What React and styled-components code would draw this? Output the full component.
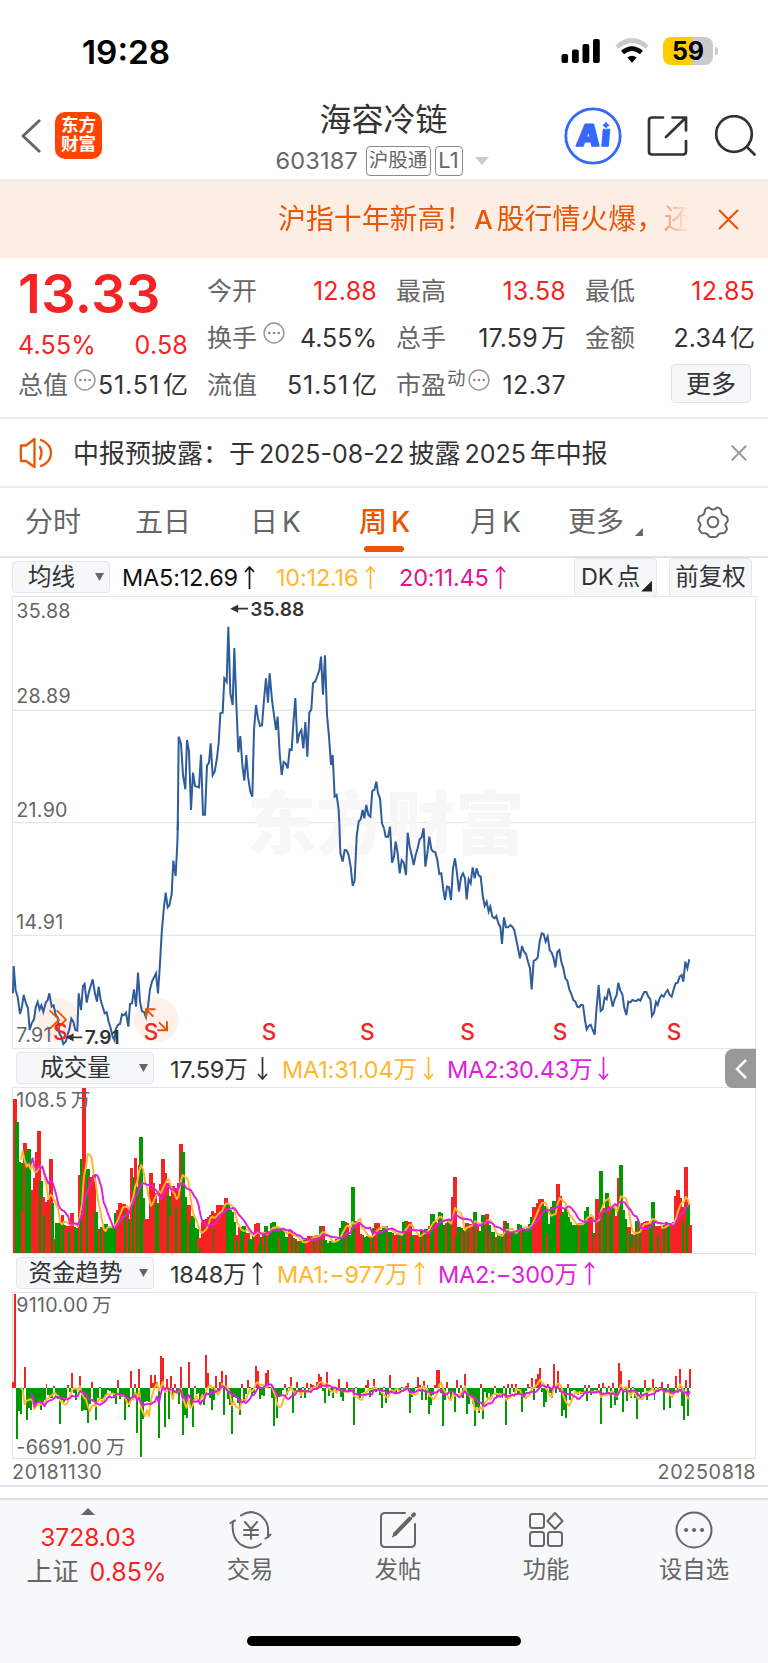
import * as React from 'react'
import styled, { createGlobalStyle } from 'styled-components'

const RED = '#f52323'
const GREEN = '#009a00'
const ORANGE = '#ea5504'
const YELLOW = '#ffb72e'
const PURPLE = '#e01ee0'
const PINK = '#e5128a'
const BLUE = '#2f5c9b'
const DARK = '#333333'
const GREY = '#666666'

const GlobalStyle = createGlobalStyle`
  * {
    box-sizing: border-box;
  }

  body {
    margin: 0;
    background: #fff;
    font-family: Inter, 'Noto Sans CJK SC', sans-serif;
    color: ${DARK};
  }
`

// The chart series are kept in thirds of a pixel, STEP is the distance
// between two weeks.
const UNIT = 3
const STEP = 5.922
const FIRST_X = 38.5
const FRAME_X = 39
const FRAME_WIDTH = 742

const PRICE_LINE = [
  {
    dy: 672,
    points:
      '39,520 41,438 47,512 53,530 60,582 66,560 71,525 78,550 84,565 89,630 95,610 102,598 107,562 113,546 119,568 124,556 130,576 137,548 143,540 148,520 155,560 161,556 167,585 173,592 178,640 184,650 190,672 198,664 204,640 208,628 214,596 220,605 226,630 232,632 236,520 243,570 249,498 254,492 260,548 267,515 272,498 278,478 285,520 291,545 296,500 302,540 308,560 314,580 320,577 326,605 332,625 338,650 343,660 348,625 355,614 360,612 366,583 372,586 378,578 385,620 390,552 396,550 402,508 408,560 414,458 420,545 426,574 432,576 438,592 444,560 450,508 456,485 462,472 468,460 474,520 480,430 485,340 491,270 497,218 503,262 508,256 515,222 520,122 527,168 532,70 534,0',
  },
  {
    dy: -18,
    points:
      '533,720 534,640 536,440 543,462 549,555 556,598 561,450 567,485 573,660 579,548 585,588 597,592 603,494 609,674 615,674 621,527 627,518 632,460 638,556 644,545 650,510 656,460 661,370 668,368 673,265 680,276 685,110 691,310 698,345 703,174 709,340 715,487 721,438 727,525 733,572 739,495 744,560 751,605 757,620 762,420 768,345 774,385 780,408 786,406 792,330 798,265 804,338 809,250 816,330 822,375 828,420 833,380 839,490 845,555 851,516 857,520 863,535 869,478 875,480 880,400 886,324 892,460 898,430 904,420 910,475 916,396 922,500 928,368 934,358 939,280 946,274 952,258 958,240 963,200 969,314 975,196 981,375 987,440 993,525 998,495 1004,620 1010,615 1016,660 1018,700',
  },
  {
    dy: 672,
    points:
      '1018,10 1021,98 1028,125 1034,90 1040,92 1046,105 1052,140 1058,198 1064,182 1070,50 1075,12',
  },
  {
    dy: -18,
    points:
      '1075,702 1076,695 1082,688 1088,660 1093,685 1099,645 1105,675 1111,680 1117,602 1123,600 1129,575 1134,610 1140,625 1146,700 1152,715',
  },
  {
    dy: 132,
    dx: 1152,
    points:
      '0,565 5,590 12,590 18,560 24,668 30,650 35,605 41,640 47,700 53,660 59,668 66,705 71,578 77,620 83,645 89,675 95,645 101,625 107,598 113,592 119,565 124,680 130,640 136,590 142,628 148,635 154,637 160,660 166,702 172,700 178,750 183,780 189,740 195,742 201,780 207,685 213,655 219,700 225,755 231,712 237,700 243,715 248,778 254,718 260,730 266,682 272,715 278,685 284,706 290,710 296,765 302,798 308,785 314,815 319,800 325,830 332,835 337,828 343,850 349,860 354,912 360,832 366,862 372,862 379,855 385,860 391,870 397,900 403,930 408,955 414,918 420,935 426,942 432,965 438,985 443,1048 449,962 455,960 461,953 467,905 473,880 479,882 485,905 491,890 497,930 503,938 509,955 514,982 520,936 526,930 532,965 538,985 544,1015 550,1022 556,1048 562,1062 568,1080 574,1085 580,1100 586,1102 591,1094 597,1096 603,1140 608,1168 614,1158 620,1154 626,1170 632,1184 638,1100 644,1035 650,1113 656,1108 662,1073 668,1078 674,1045 680,1070 686,1100 692,1078 698,1065 703,1028 709,1052 715,1062 721,1105 727,1125 733,1085 739,1087 745,1080 751,1082 757,1083 763,1078 769,1082 775,1068 781,1056 787,1056 793,1070 799,1078 804,1128 810,1118 816,1086 821,1095 827,1075 833,1065 839,1070 845,1058 851,1050 857,1065 863,1070 869,1048 875,1030 881,1028 887,1010 893,1005 898,1025 904,965 910,985 916,958',
  },
]

// r = up week, g = down week, the number is the top of the bar
const VOLUME = `
r515 r56 g127 g247 g250 r393 r190 g220 g206 g330 r330 r295 r217 r153 g302 r350 g408 r366 r360 r236
g370 r478 g430 g428 g425 r405 g435 r440 r437 g455 r398 r440 g445 g460 r284 g238 r24 r300 g268 r290
r292 r286 g397 g500 r447 g440 r447 g432 g445 g440 g445 g440 g400 r390 r370 r372 r371 g400 r385 g418
r264 g292 r235 g320 r255 g172 g355 r417 r418 r418 r280 r310 r340 g368 g368 r312 r237 r280 r310 g349
r408 r318 r325 g385 r310 r191 g215 g351 g398 r374 g425 g408 g445 g447 r475 g500 r425 r420 r418 r412
r405 r394 g443 r400 r375 r375 r375 r374 r355 g373 g390 g395 g425 r465 g480 r440 g440 g438 r462 r460
g478 g480 g462 r433 r430 g495 g470 r462 g437 r452 g468 g428 g427 g442 g440 r475 g445 g444 g472 g470
r452 r455 g475 r478 g482 r483 g482 g507 g480 r478 r468 r467 r468 g478 r466 r465 g437 r438 g480 g490
g488 g482 g487 g482 g478 g470 g445 g424 g425 r428 g465 g493 g320 g450 r422 r425 r462 r465 g470 g472
g468 g473 r468 g443 r430 r430 g455 g450 g437 g437 r460 g455 g458 r465 r465 r462 g465 r470 g425 g424
r425 r426 g465 g480 r465 r467 r468 g453 r455 g448 r450 r437 g402 g403 r425 r430 g395 g398 g445 g435
r430 g418 g425 r352 r291 g470 g442 g443 r450 g450 r430 g432 r432 r432 g397 r435 g452 g453 g405 g405
r402 g435 r460 g455 g470 r472 g465 g468 g463 r423 g430 r460 r458 g458 g460 g458 g432 g435 r447 g448
g447 g440 g432 g410 r381 r380 r368 r357 r358 g378 g380 r463 g432 g382 g364 g365 r312 r348 g405 g395
g385 g410 g425 g436 g436 g436 g428 r430 g435 g430 g392 g382 r410 r412 g460 r470 r358 r400 g272 r385
g400 g338 r378 g405 g378 r408 r410 r293 g255 g390 g418 g440 r442 g462 r500 r465 g423 r440 g440 r430
r427 r422 r430 g435 g367 r440 r438 g465 r438 r438 g436 r425 g435 g435 r430 r425 r347 r330 r355 r380
g425 r262 g375 r435`

const FUNDS = [
  18, 284, -153, -68, -76, -10, 65, -96, -58, -65, -35, -55, -45, -42, -64, -40, -35, 13, -20, -30,
  -28, 7, -28, -32, -106, -35, -40, -30, 10, -12, 47, -15, -35, -5, 38, -67, -66, -65, -105, -48,
  18, -42, -95, -30, 4, -32, -30, -20, -5, -8, -18, -28, -48, 24, -32, -25, -20, -96, -45, -56,
  52, -25, 12, -134, 57, -206, -93, -42, -38, -40, 40, 15, 40, 20, -150, 97, 92, -115, 28, -92,
  37, -20, 12, -15, -48, 64, -139, -80, -90, 78, -60, -117, 8, -18, -15, -48, -25, -50, 100, 46,
  -30, -64, -35, 36, -5, 20, 52, -80, 40, -32, -50, -137, -25, -30, -45, -80, 12, -40, -18, 26,
  5, -20, -15, 68, 52, -32, -20, -22, 46, 56, 3, -30, -112, -25, -90, -25, -20, -5, 12, -20,
  5, 33, -75, -10, 18, -12, -30, 5, -28, 15, -8, 13, 10, -5, 18, 42, 34, -8, -44, 48,
  -22, -12, -30, 3, -8, 28, -25, -38, -10, 18, -5, -8, -12, -111, 3, -20, -28, -15, -12, 10,
  25, -25, -10, 28, -12, -8, -20, -59, 4, -45, -15, 41, -15, -10, -18, -5, -8, 3, -5, 8,
  15, -75, -25, -15, 5, 33, 10, -35, 22, -34, 10, -76, -50, -20, 10, 55, 55, -15, -114, -36,
  18, -12, -38, -12, -70, 26, -15, 10, -30, 42, -78, -48, -30, -48, -114, -55, -75, 14, -92, -10,
  -30, -15, -25, -20, 6, -28, -22, -20, -30, 6, -109, 12, -18, 12, -12, 12, -20, -18, -72, -30,
  -8, 12, 5, 32, -36, 28, 44, 62, -10, -56, -40, 12, -15, -30, 74, -15, 52, -10, -84, -65,
  -88, 12, -35, -8, -5, -12, -20, -10, -18, -10, 10, -38, 10, -20, -15, -5, -15, 12, -108, 15,
  3, -15, 8, -60, 15, -50, -35, 76, 52, -72, -5, -38, 26, -30, 3, -30, -92, -12, -20, -10,
  24, -34, -12, -5, 28, -35, 3, -10, 5, 18, -66, -8, 14, -60, -10, -10, 38, -15, 57, -54,
  -95, 26, -84, 58,
]

const volumeBars = VOLUME.trim()
  .split(/\s+/)
  .map((token) => ({ up: token[0] === 'r', top: Number(token.slice(1)) }))

const weekX = (index) => FIRST_X + index * STEP

const movingAverage = (values, length) =>
  values
    .map((_, i) => {
      if (i < length - 1) return null
      const part = values.slice(i - length + 1, i + 1)
      return `${weekX(i).toFixed(1)},${(part.reduce((a, b) => a + b, 0) / length).toFixed(1)}`
    })
    .filter(Boolean)
    .join(' ')

const Screen = styled.main`
  width: 768px;
  height: 1663px;
  overflow: hidden;
  display: flex;
  flex-direction: column;
  background: #fff;
`

/* status bar */

const StyledStatusBar = styled.div`
  height: 90px;
  padding: 37px 55px 0 82px;
  display: flex;
  align-items: flex-start;
  justify-content: space-between;
`

const Clock = styled.span`
  font-size: 33.3px;
  line-height: 30px;
  font-weight: 600;
  color: #000;
`

const StatusIcons = styled.div`
  display: flex;
  align-items: center;
  gap: 14px;
`

const Battery = styled.div`
  position: relative;
  width: 50px;
  height: 28px;
  border-radius: 8px;
  background: linear-gradient(90deg, #ffcc00 58%, #cacaca 58%);
  color: #000;
  font-size: 25px;
  line-height: 28px;
  font-weight: 700;
  text-align: center;

  &::after {
    content: '';
    position: absolute;
    right: -5px;
    top: 10px;
    width: 3px;
    height: 8px;
    border-radius: 0 3px 3px 0;
    background: #cacaca;
  }
`

const StatusBar = () => (
  <StyledStatusBar>
    <Clock>19:28</Clock>
    <StatusIcons>
      <svg width="40" height="26" viewBox="0 0 40 26">
        <rect x="0.5" y="16" width="6.6" height="9" rx="2" />
        <rect x="11" y="11.5" width="6.8" height="13.5" rx="2" />
        <rect x="21.5" y="6" width="6.8" height="19" rx="2" />
        <rect x="32" y="1" width="6.8" height="24" rx="2" />
      </svg>
      <svg width="34" height="26" viewBox="0 0 34 26" fill="none" strokeWidth="4.6">
        <path d="M2 9 Q17 -4 32 9" stroke="#cacaca" />
        <path d="M7.5 14.6 Q17 6.6 26.5 14.6" stroke="#000" />
        <path d="M12.3 19.6 Q17 15.8 21.700 19.6 L17 24.800Z" fill="#000" />
      </svg>
      <Battery>59</Battery>
    </StatusIcons>
  </StyledStatusBar>
)

/* header */

const StyledHeader = styled.header`
  height: 91px;
  padding: 0 12px 0 20px;
  border-bottom: 2px solid #ececee;
  display: grid;
  grid-template-columns: 240px 1fr 192px;
`

const HeaderSide = styled.div`
  display: flex;
  align-items: center;
  height: 92px;
`

const BackIcon = styled.svg`
  width: 22px;
  height: 36px;
`

const Logo = styled.div`
  width: 47px;
  height: 47px;
  margin: -2px 0 0 13px;
  border-radius: 10px;
  background: #ff4400;
  color: #fff;
  display: flex;
  flex-direction: column;
  justify-content: center;
  text-align: center;
  font-size: 17.5px;
  line-height: 19.5px;
  font-weight: 700;
  padding-bottom: 2px;
`

const HeaderCenter = styled.div`
  display: flex;
  flex-direction: column;
`

const StockName = styled.h1`
  margin: 12px 0 0 59.5px;
  font-size: 32px;
  line-height: 36px;
  font-weight: 400;
`

const StockMeta = styled.div`
  display: flex;
  align-items: center;
  height: 31px;
  margin: 7px 0 0 15.5px;
  color: ${GREY};
`

const StockCode = styled.span`
  width: 90px;
  font-size: 23.5px;
  letter-spacing: 0.2px;
`

const Tag = styled.span`
  width: ${(props) => props.$width};
  height: 30px;
  margin-right: 4px;
  border: 1.5px solid #8a8a8a;
  border-radius: 4px;
  font-size: ${(props) => props.$size};
  line-height: 27px;
  text-align: center;
  white-space: nowrap;
`

const TagArrow = styled.svg`
  width: 14px;
  height: 8px;
  margin-left: 8px;
`

const HeaderActions = styled(HeaderSide)`
  justify-content: space-between;
`

const AiLetters = styled.text`
  font-size: 30px;
  font-weight: 900;
  letter-spacing: 1px;
  fill: #3768fb;
  stroke: #3768fb;
  stroke-width: 1.6px;
  stroke-linejoin: round;
`

const Header = () => (
  <StyledHeader>
    <HeaderSide>
      <BackIcon viewBox="0 0 22 36" fill="none" stroke="#666" strokeWidth="3">
        <path d="M20 2 L3 18 L20 34" strokeLinejoin="round" />
      </BackIcon>
      <Logo>
        <span>东方</span>
        <span>财富</span>
      </Logo>
    </HeaderSide>
    <HeaderCenter>
      <StockName>海容冷链</StockName>
      <StockMeta>
        <StockCode>603187</StockCode>
        <Tag $width="65px" $size="19.5px">沪股通</Tag>
        <Tag $width="28px" $size="22px">L1</Tag>
        <TagArrow viewBox="0 0 14 8">
          <path d="M0 0H14L7 8Z" fill="#ccc" />
        </TagArrow>
      </StockMeta>
    </HeaderCenter>
    <HeaderActions>
      <svg width="58" height="58" viewBox="0 0 58 58">
        <circle cx="29" cy="29" r="27.2" fill="none" stroke="#3768fb" strokeWidth="2.8" />
        <AiLetters x="15" y="39" transform="skewX(-5)">Aı</AiLetters>
        <path d="M42 13.500 Q43 17.300 46.500 18.200 Q43 19.200 42 22.500 Q41 19.200 37.500 18.200 Q41 17.300 42 13.500Z" fill="#3768fb" stroke="#fff" strokeWidth="0.600" />
      </svg>
      <svg width="42" height="42" viewBox="0 0 42 42" fill="none" stroke="#333" strokeWidth="2.7" strokeLinecap="round" strokeLinejoin="round">
        <path d="M16 2.500H5Q2 2.500 2 5.500V36.500Q2 39.500 5 39.500H36Q39 39.500 39 36.500V26" />
        <path d="M25.500 2.500H39V15.500M38.500 3L19 22" />
      </svg>
      <svg width="42" height="42" viewBox="0 0 42 42" fill="none" stroke="#333" strokeWidth="2.7" strokeLinecap="round">
        <circle cx="20" cy="19" r="17.800" />
        <path d="M33 32 L40.500 39.500" />
      </svg>
    </HeaderActions>
  </StyledHeader>
)

/* orange banner */

const StyledBanner = styled.div`
  height: 77px;
  padding: 0 29px 0 278px;
  background: #fdeee5;
  color: ${ORANGE};
  display: flex;
  align-items: center;
  justify-content: space-between;
`

const BannerText = styled.span`
  width: 416px;
  white-space: nowrap;
  font-size: 27.9px;
  line-height: 40px;
  mask-image: linear-gradient(90deg, #000 375px, rgba(0, 0, 0, 0.45) 390px, transparent 412px);

  b {
    font-weight: 500;
    font-size: 26px;
    margin: 0 4px 0 1px;
  }
`

const Cross = ({ size, color, width = 2 }) => (
  <svg width={size} height={size} viewBox="0 0 20 20" stroke={color} strokeWidth={width}>
    <path d="M1 1 L19 19 M19 1 L1 19" />
  </svg>
)

/* quote */

const StyledQuote = styled.section`
  height: 161px;
  padding: 9px 13px 0 18px;
  display: grid;
  grid-template-columns: repeat(4, 170px);
  column-gap: 19px;
  border-bottom: 2px solid #ececee;
`

const QuoteColumn = styled.div`
  display: flex;
  flex-direction: column;
`

const Price = styled.div`
  height: 54px;
  font-size: 54px;
  line-height: 53px;
  font-weight: 600;
  color: ${RED};
  letter-spacing: 0.4px;
`

const QuoteCell = styled.div`
  height: ${(props) => props.$height || '47px'};
  display: flex;
  align-items: center;
  justify-content: space-between;
  font-size: 25px;
  line-height: 40px;
  white-space: nowrap;
`

const QuoteLabel = styled.span`
  display: flex;
  align-items: center;
  color: ${GREY};
  font-size: 25px;

  sup {
    font-size: 18.5px;
    line-height: 20px;
    margin: -14px 0 0 1px;
  }
`

const QuoteValue = styled.span`
  color: ${(props) => (props.$up ? RED : DARK)};
  letter-spacing: ${(props) => props.$spacing || '0.2px'};

  em {
    font-style: normal;
    letter-spacing: 0;
    margin-left: 3px;
  }
`

const MoreButton = styled.button`
  width: 80px;
  height: 39px;
  margin: -2px 4px 0 auto;
  padding: 0;
  border: 1.5px solid #e1e5ea;
  border-radius: 4px;
  background: #f6f7f9;
  color: ${DARK};
  font: 400 25px/34px Inter, 'Noto Sans CJK SC', sans-serif;
`

const Hint = styled.svg`
  width: 22px;
  height: 22px;
  margin: -9px 0 0 ${(props) => props.$left || '6px'};
`

const HintIcon = (props) => (
  <Hint viewBox="0 0 22 22" {...props}>
    <circle cx="11" cy="11" r="9.900" fill="none" stroke="#999" strokeWidth="1.500" />
    <g fill="#888">
      <circle cx="6.300" cy="11" r="1.300" />
      <circle cx="11" cy="11" r="1.300" />
      <circle cx="15.700" cy="11" r="1.300" />
    </g>
  </Hint>
)

const Quote = () => (
  <StyledQuote>
    <QuoteColumn>
      <Price>13.33</Price>
      <QuoteCell $height="48px">
        <QuoteValue $up>4.55%</QuoteValue>
        <QuoteValue $up>0.58</QuoteValue>
      </QuoteCell>
      <QuoteCell $height="31px">
        <QuoteLabel>总值<HintIcon /></QuoteLabel>
        <QuoteValue $spacing="0.9px">51.51<em>亿</em></QuoteValue>
      </QuoteCell>
    </QuoteColumn>
    <QuoteColumn>
      <QuoteCell>
        <QuoteLabel>今开</QuoteLabel>
        <QuoteValue $up>12.88</QuoteValue>
      </QuoteCell>
      <QuoteCell>
        <QuoteLabel>换手<HintIcon /></QuoteLabel>
        <QuoteValue $spacing="0">4.55%</QuoteValue>
      </QuoteCell>
      <QuoteCell>
        <QuoteLabel>流值</QuoteLabel>
        <QuoteValue $spacing="0.9px">51.51<em>亿</em></QuoteValue>
      </QuoteCell>
    </QuoteColumn>
    <QuoteColumn>
      <QuoteCell>
        <QuoteLabel>最高</QuoteLabel>
        <QuoteValue $up>13.58</QuoteValue>
      </QuoteCell>
      <QuoteCell>
        <QuoteLabel>总手</QuoteLabel>
        <QuoteValue>17.59<em>万</em></QuoteValue>
      </QuoteCell>
      <QuoteCell>
        <QuoteLabel>市盈<sup>动</sup><HintIcon $left="2px" /></QuoteLabel>
        <QuoteValue $spacing="0.4px">12.37</QuoteValue>
      </QuoteCell>
    </QuoteColumn>
    <QuoteColumn>
      <QuoteCell>
        <QuoteLabel>最低</QuoteLabel>
        <QuoteValue $up>12.85</QuoteValue>
      </QuoteCell>
      <QuoteCell>
        <QuoteLabel>金额</QuoteLabel>
        <QuoteValue $spacing="0">2.34<em>亿</em></QuoteValue>
      </QuoteCell>
      <QuoteCell>
        <MoreButton>更多</MoreButton>
      </QuoteCell>
    </QuoteColumn>
  </StyledQuote>
)

/* notice */

const StyledNotice = styled.div`
  height: 69px;
  padding: 0 21px 0 19px;
  display: flex;
  align-items: center;
  border-bottom: 2px solid #ececee;
`

const NoticeText = styled.span`
  flex: 1;
  margin: -3px 0 0 20px;
  font-size: 26px;
  white-space: nowrap;

  span {
    font-size: 25px;
    margin: 0 4px;
  }
`

const Notice = () => (
  <StyledNotice>
    <svg width="34" height="32" viewBox="0 0 34 32" fill="none" stroke={ORANGE} strokeWidth="2.300" strokeLinejoin="round" strokeLinecap="round">
      <path d="M2 8.500H7L15.500 2V30L7 24H2Q1.500 16 2 8.500Z" />
      <path d="M21 10Q24 16 21 22M22 3Q32 7 32 16T22 29" />
    </svg>
    <NoticeText>
      中报预披露：于<span>2025-08-22</span>披露<span>2025</span>年中报
    </NoticeText>
    <Cross size={16} color="#999" width={2.4} />
  </StyledNotice>
)

/* period tabs */

const StyledTabs = styled.nav`
  height: 70px;
  padding-left: 25px;
  display: flex;
  border-bottom: 2px solid #e1e3e8;
`

const Tab = styled.div`
  position: relative;
  width: ${(props) => props.$width};
  font-size: 28px;
  line-height: 68px;
  white-space: nowrap;
  font-weight: ${(props) => (props.$active ? 500 : 400)};
  color: ${(props) => (props.$active ? ORANGE : GREY)};

  b {
    font-weight: inherit;
    margin-left: 4px;
  }

  i {
    margin: 0 0 -4px 3px;
  }

  &::after {
    content: '';
    display: ${(props) => (props.$active ? 'block' : 'none')};
    position: absolute;
    left: 5px;
    bottom: 4px;
    width: 40px;
    height: 6px;
    border-radius: 3px;
    background: ${ORANGE};
  }
`

const CornerMark = styled.i`
  display: inline-block;
  width: ${(props) => props.$size};
  height: ${(props) => props.$size};
  background: ${(props) => props.$color};
  clip-path: polygon(100% 0, 100% 100%, 0 100%);
`

const GearIcon = styled.svg`
  width: 32px;
  height: 32px;
  margin-top: 18px;
`

const Tabs = () => (
  <StyledTabs>
    <Tab $width="110px">分时</Tab>
    <Tab $width="115px">五日</Tab>
    <Tab $width="109px">日<b>K</b></Tab>
    <Tab $width="111px" $active>周<b>K</b></Tab>
    <Tab $width="98px">月<b>K</b></Tab>
    <Tab $width="129px">
      更多 <CornerMark $size="8px" $color={GREY} />
    </Tab>
    <GearIcon viewBox="0 0 32 32" fill="none" stroke="#666" strokeWidth="2" strokeLinejoin="round">
      <path d="M10.500 1.800 Q12 1.200 13 2.300 Q16 4.800 19 2.300 Q20 1.200 21.500 1.800 L23.300 2.900 Q24.300 3.800 24.200 5.300 Q24.300 8.900 28.300 9.900 Q29.700 10.300 30.200 11.500 L30.800 14 Q30.900 15.200 30 16 Q27.200 18.600 29.600 21.500 Q30.300 22.800 29.600 24 L27.700 26.600 Q26.800 27.600 25.400 27.300 Q21.700 26.800 20.500 29.800 Q19.900 31 18.500 31 H13.500 Q12.100 31 11.500 29.800 Q10.300 26.800 6.600 27.300 Q5.200 27.600 4.300 26.600 L2.400 24 Q1.700 22.800 2.400 21.500 Q4.800 18.600 2 16 Q1.100 15.200 1.200 14 L1.800 11.500 Q2.300 10.300 3.700 9.900 Q7.700 8.900 7.800 5.300 Q7.700 3.800 8.700 2.900Z" />
      <circle cx="16" cy="16" r="5.300" />
    </GearIcon>
  </StyledTabs>
)

/* indicator rows */

const IndicatorRow = styled.div`
  position: relative;
  height: ${(props) => props.$height};
  padding-left: ${(props) => props.$left};
  display: flex;
  align-items: center;
`

const Select = styled.div`
  width: ${(props) => props.$width};
  height: 32px;
  margin-right: ${(props) => props.$right};
  padding-right: 5px;
  border: 1.5px solid #e3e6eb;
  border-radius: 4px;
  background: #f6f7f9;
  display: flex;
  align-items: center;
  font-size: 23.5px;
  line-height: 28px;

  span {
    flex: 1;
    padding-right: 5px;
    text-align: center;
  }

  &::after {
    content: '';
    width: 9px;
    height: 8px;
    background: ${GREY};
    clip-path: polygon(0 0, 100% 0, 50% 100%);
  }
`

const StyledReading = styled.span`
  width: ${(props) => props.$width};
  color: ${(props) => props.$color};
  display: flex;
  align-items: center;
  font-size: 23.5px;
  white-space: nowrap;
  letter-spacing: -0.2px;

  svg {
    margin-left: ${(props) => props.$gap || '6px'};
  }
`

const Reading = ({ children, down, ...props }) => (
  <StyledReading {...props}>
    {children}
    <svg width="11" height="23" viewBox="0 0 11 23" fill="none" stroke="currentColor" strokeWidth="1.700">
      <path d={down ? 'M5.500 0V22M1 17L5.500 22L10 17' : 'M5.500 23V1M1 6L5.500 1L10 6'} />
    </svg>
  </StyledReading>
)

const ToolButton = styled.button`
  width: 83px;
  height: 39px;
  margin-right: ${(props) => props.$right || '0'};
  padding: 0;
  border: 1.5px solid #e3e6eb;
  border-radius: 4px;
  background: #f6f7f9;
  color: ${DARK};
  font: 400 23.5px/34px Inter, 'Noto Sans CJK SC', sans-serif;
  white-space: nowrap;
  display: flex;
  align-items: center;
  justify-content: center;

  span {
    margin-left: 3px;
  }

  i {
    align-self: flex-end;
    margin: 0 -2px 4px 1px;
  }
`

const Collapse = styled.div`
  position: absolute;
  right: 12px;
  top: 0;
  width: 31px;
  height: 39px;
  border-radius: 8px 0 0 8px;
  background: #999;
  display: flex;
  align-items: center;
  justify-content: center;
`

/* charts */

const ChartFrame = styled.div`
  width: 744px;
  height: ${(props) => props.$height};
  margin-left: 12px;
  border: 1px solid #e3e5ea;

  svg {
    display: block;
    overflow: visible;
  }
`

const AxisLabel = styled.text`
  font-size: 59px;
  letter-spacing: 0.8px;
  fill: ${GREY};
`

const PeakLabel = styled.text`
  font-size: 57.5px;
  font-weight: 600;
  fill: ${DARK};
`

const Marker = styled.text`
  font-size: 68px;
  font-weight: 500;
  fill: ${RED};
  text-anchor: middle;
`

const Watermark = styled.text`
  font-size: 208px;
  font-weight: 900;
  fill: #f7f7f7;
`

const Average = styled.polyline`
  fill: none;
  stroke: ${(props) => props.$color};
  stroke-width: 5.8px;
  stroke-linejoin: round;
`

const Canvas = ({ height, top, children }) => (
  <svg
    width={FRAME_WIDTH}
    height={height}
    viewBox={`${FRAME_X} ${top} ${FRAME_WIDTH * UNIT} ${height * UNIT}`}
  >
    {children}
  </svg>
)

const PriceChart = () => (
  <ChartFrame $height="453px">
    <Canvas height={451} top={3}>
      {[343, 680, 1018].map((y) => (
        <path key={y} d={`M39 ${y}H2265`} stroke="#e2e7ee" strokeWidth="4" />
      ))}
      <Watermark x="741" y="759">东方财富</Watermark>
      <circle cx="170" cy="1272" r="67" fill="#fdeee5" fillOpacity="0.85" />
      <circle cx="469" cy="1272" r="67" fill="#fdeee5" fillOpacity="0.85" />
      <AxisLabel x="49" y="66">35.88</AxisLabel>
      <AxisLabel x="49" y="321">28.89</AxisLabel>
      <AxisLabel x="49" y="662">21.90</AxisLabel>
      <AxisLabel x="49" y="1000">14.91</AxisLabel>
      <AxisLabel x="49" y="1338">7.91</AxisLabel>
      {PRICE_LINE.map((part, i) => (
        <g key={i} transform={`translate(${part.dx || 0} ${part.dy})`}>
          <polyline points={part.points} fill="none" stroke={BLUE} strokeWidth="6" strokeLinejoin="miter" />
        </g>
      ))}
      <path d="M149 1243L177 1271L149 1299M170 1243L198 1271L170 1299" fill="none" stroke={ORANGE} strokeWidth="5.500" />
      <path d="M438 1264V1240H466M440 1242L460 1262M501 1276V1303H472M499 1301L477 1279" fill="none" stroke={ORANGE} strokeWidth="6" />
      {[181, 453, 807, 1102, 1403, 1680, 2022].map((x) => (
        <Marker key={x} x={x} y="1333">S</Marker>
      ))}
      <g fill={DARK} stroke={DARK} strokeWidth="5">
        <path d="M744 38H700M712 30L696 38L712 46Z" />
        <path d="M247 1324H208M218 1316L203 1324L218 1332Z" />
      </g>
      <PeakLabel x="751" y="60">35.88</PeakLabel>
      <PeakLabel x="254" y="1343">7.91</PeakLabel>
    </Canvas>
  </ChartFrame>
)

const VolumeChart = () => {
  const tops = volumeBars.map((bar) => bar.top)
  return (
    <ChartFrame $height="167px">
      <Canvas height={165} top={24}>
        <g shapeRendering="crispEdges">
          {volumeBars.map((bar, i) => (
            <rect key={i} x={Math.max(39, weekX(i) - 5)} y={bar.top} width="11.500" height={520 - bar.top} fill={bar.up ? RED : GREEN} />
          ))}
        </g>
        <AxisLabel x="49" y="82">
          108.5<tspan dx="11">万</tspan>
        </AxisLabel>
        <Average $color={YELLOW} points={movingAverage(tops, 5)} />
        <Average $color={PURPLE} points={movingAverage(tops, 10)} />
      </Canvas>
    </ChartFrame>
  )
}

const FundsChart = () => {
  const tops = FUNDS.map((value) => 400 - value)
  return (
    <ChartFrame $height="167px">
      <Canvas height={165} top={114}>
        <g shapeRendering="crispEdges">
          {FUNDS.map((value, i) => (
            <rect key={i} x={weekX(i) - 2.6} y={Math.min(400, 400 - value)} width={STEP} height={Math.abs(value)} fill={value > 0 ? RED : GREEN} />
          ))}
        </g>
        <AxisLabel x="49" y="170">
          9110.00<tspan dx="11">万</tspan>
        </AxisLabel>
        <AxisLabel x="49" y="597">
          -6691.00<tspan dx="11">万</tspan>
        </AxisLabel>
        <Average $color={YELLOW} points={movingAverage(tops, 5)} />
        <Average $color={PURPLE} points={movingAverage(tops, 10)} />
      </Canvas>
    </ChartFrame>
  )
}

const DateRow = styled.div`
  height: 28px;
  padding: 0 12px;
  border-bottom: 2px solid #e1e3e8;
  display: flex;
  justify-content: space-between;
  font-size: 19.8px;
  line-height: 26px;
  letter-spacing: 0.6px;
  color: ${GREY};
`

/* bottom bar */

const StyledBottomBar = styled.footer`
  flex: 1;
  margin-top: 11px;
  border-top: 2px solid #dcdee3;
  background: #f7f8fa;
  display: flex;
  flex-direction: column;
  align-items: center;
`

const NavItems = styled.div`
  width: 768px;
  height: 136px;
  display: grid;
  grid-template-columns: 176px repeat(4, 148px);
`

const IndexSummary = styled.div`
  display: flex;
  flex-direction: column;
  align-items: center;
  padding-top: 8px;
  color: ${RED};
  font-size: 24.5px;
  line-height: 34px;

  svg {
    margin-bottom: 5px;
  }
`

const IndexChange = styled.div`
  display: flex;
  align-items: center;
  gap: 11px;
  padding: 1px 0 0 17px;
  font-size: 25px;

  span {
    color: ${GREY};
    font-size: 26px;
  }
`

const StyledNavItem = styled.div`
  display: flex;
  flex-direction: column;
  align-items: center;
  padding-top: 10px;
  font-size: 23.3px;
  line-height: 40px;
  color: ${GREY};
`

const NavItem = ({ label, children }) => (
  <StyledNavItem>
    <svg width="44" height="40" viewBox="0 0 44 40" fill="none" stroke="#666" strokeWidth="2" strokeLinecap="round" strokeLinejoin="round">
      {children}
    </svg>
    {label}
  </StyledNavItem>
)

const HomeBar = styled.div`
  width: 274px;
  height: 10px;
  border-radius: 5px;
  background: #000;
`

const BottomBar = () => (
  <StyledBottomBar>
    <NavItems>
      <IndexSummary>
        <svg width="14" height="7" viewBox="0 0 14 7">
          <path d="M0 7L7 0L14 7Z" fill="#666" />
        </svg>
        <div>3728.03</div>
        <IndexChange>
          <span>上证</span>0.85%
        </IndexChange>
      </IndexSummary>
      <NavItem label="交易">
        <path d="M13 5.500Q22 -1 32 5Q41 12 40 22V27L42.500 24.500M40 27L37.500 28.500M33 34Q23 41.500 12 34Q3 27 5 11.500L2.500 13M5 11.500L7 10.500" />
        <path d="M17 12L23 19L29 12M23 19V29M16 20H30M16 25H30" />
      </NavItem>
      <NavItem label="发帖">
        <path d="M29 3H9Q5 3 5 7V33Q5 37 9 37H35Q39 37 39 33V14" />
        <path d="M19 24L34 8.500" strokeWidth="4" />
        <path d="M37 5.300L38 4.300" strokeWidth="4" />
        <path d="M17 26.500L19 24" />
      </NavItem>
      <NavItem label="功能">
        <rect x="6" y="4" width="14" height="14" rx="2.500" />
        <rect x="6" y="22" width="14" height="14" rx="2.500" />
        <rect x="24" y="22" width="14" height="14" rx="2.500" />
        <path d="M31 3L38.500 11L31 19L23.500 11Z" />
      </NavItem>
      <NavItem label="设自选">
        <circle cx="22" cy="20" r="17.500" />
        <path d="M14 20H14.100M22 20H22.100M30 20H30.100" strokeWidth="4" />
      </NavItem>
    </NavItems>
    <HomeBar />
  </StyledBottomBar>
)

export default function App() {
  return (
    <>
      <GlobalStyle />
      <Screen>
        <StatusBar />
        <Header />
        <StyledBanner>
          <BannerText>
            沪指十年新高！<b>A</b>股行情火爆，还
          </BannerText>
          <Cross size={21} color={ORANGE} />
        </StyledBanner>
        <Quote />
        <Notice />
        <Tabs />
        <IndicatorRow $height="38px" $left="12px">
          <Select $width="98px" $right="12px"><span>均线</span></Select>
          <Reading $width="154px" $color="#111">MA5:12.69</Reading>
          <Reading $width="123px" $color={YELLOW} $gap="7px">10:12.16</Reading>
          <Reading $width="175px" $color={PINK}>20:11.45</Reading>
          <ToolButton $right="12px">
            DK<span>点</span><CornerMark $size="11px" $color="#222" />
          </ToolButton>
          <ToolButton>前复权</ToolButton>
        </IndicatorRow>
        <PriceChart />
        <IndicatorRow $height="38px" $left="16px">
          <Select $width="138px" $right="16px"><span>成交量</span></Select>
          <Reading $width="112px" $color={DARK} $gap="9px" down>17.59万</Reading>
          <Reading $width="165px" $color={YELLOW} down>MA1:31.04万</Reading>
          <Reading $color={PURPLE} down>MA2:30.43万</Reading>
          <Collapse>
            <svg width="12" height="20" viewBox="0 0 12 20" fill="none" stroke="#fff" strokeWidth="2.500">
              <path d="M11 1L2 10L11 19" />
            </svg>
          </Collapse>
        </IndicatorRow>
        <VolumeChart />
        <IndicatorRow $height="38px" $left="16px">
          <Select $width="138px" $right="16px"><span>资金趋势</span></Select>
          <Reading $width="107px" $color={DARK}>1848万</Reading>
          <Reading $width="161px" $color={YELLOW}>MA1:−977万</Reading>
          <Reading $color={PURPLE}>MA2:−300万</Reading>
        </IndicatorRow>
        <FundsChart />
        <DateRow>
          <span>20181130</span>
          <span>20250818</span>
        </DateRow>
        <BottomBar />
      </Screen>
    </>
  )
}
